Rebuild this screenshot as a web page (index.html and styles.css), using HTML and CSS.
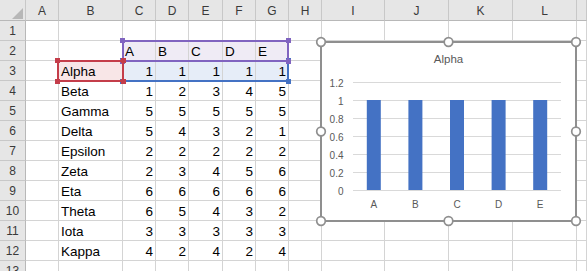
FILE: index.html
```
<!DOCTYPE html>
<html>
<head>
<meta charset="utf-8">
<link rel="stylesheet" href="styles.css">
</head>
<body>
<div class="sheet">
  <div class="ch corner"><span class="tri"></span></div>
  <div class="ch">A</div><div class="ch">B</div><div class="ch">C</div><div class="ch">D</div><div class="ch">E</div><div class="ch">F</div><div class="ch">G</div><div class="ch">H</div><div class="ch">I</div><div class="ch">J</div><div class="ch">K</div><div class="ch">L</div><div class="ch"></div>

  <div class="rh">1</div>
  <div class="c"></div><div class="c"></div><div class="c"></div><div class="c"></div><div class="c"></div><div class="c"></div><div class="c"></div><div class="c"></div><div class="c"></div><div class="c"></div><div class="c"></div><div class="c"></div><div class="c"></div>

  <div class="rh">2</div>
  <div class="c"></div><div class="c"></div>
  <div class="c fp">A</div><div class="c fp">B</div><div class="c fp">C</div><div class="c fp">D</div><div class="c fp">E</div>
  <div class="c"></div><div class="c"></div><div class="c"></div><div class="c"></div><div class="c"></div><div class="c"></div>

  <div class="rh">3</div>
  <div class="c"></div><div class="c fr">Alpha</div>
  <div class="c n fb">1</div><div class="c n fb">1</div><div class="c n fb">1</div><div class="c n fb">1</div><div class="c n fb">1</div>
  <div class="c"></div><div class="c"></div><div class="c"></div><div class="c"></div><div class="c"></div><div class="c"></div>

  <div class="rh">4</div>
  <div class="c"></div><div class="c">Beta</div>
  <div class="c n">1</div><div class="c n">2</div><div class="c n">3</div><div class="c n">4</div><div class="c n">5</div>
  <div class="c"></div><div class="c"></div><div class="c"></div><div class="c"></div><div class="c"></div><div class="c"></div>

  <div class="rh">5</div>
  <div class="c"></div><div class="c">Gamma</div>
  <div class="c n">5</div><div class="c n">5</div><div class="c n">5</div><div class="c n">5</div><div class="c n">5</div>
  <div class="c"></div><div class="c"></div><div class="c"></div><div class="c"></div><div class="c"></div><div class="c"></div>

  <div class="rh">6</div>
  <div class="c"></div><div class="c">Delta</div>
  <div class="c n">5</div><div class="c n">4</div><div class="c n">3</div><div class="c n">2</div><div class="c n">1</div>
  <div class="c"></div><div class="c"></div><div class="c"></div><div class="c"></div><div class="c"></div><div class="c"></div>

  <div class="rh">7</div>
  <div class="c"></div><div class="c">Epsilon</div>
  <div class="c n">2</div><div class="c n">2</div><div class="c n">2</div><div class="c n">2</div><div class="c n">2</div>
  <div class="c"></div><div class="c"></div><div class="c"></div><div class="c"></div><div class="c"></div><div class="c"></div>

  <div class="rh">8</div>
  <div class="c"></div><div class="c">Zeta</div>
  <div class="c n">2</div><div class="c n">3</div><div class="c n">4</div><div class="c n">5</div><div class="c n">6</div>
  <div class="c"></div><div class="c"></div><div class="c"></div><div class="c"></div><div class="c"></div><div class="c"></div>

  <div class="rh">9</div>
  <div class="c"></div><div class="c">Eta</div>
  <div class="c n">6</div><div class="c n">6</div><div class="c n">6</div><div class="c n">6</div><div class="c n">6</div>
  <div class="c"></div><div class="c"></div><div class="c"></div><div class="c"></div><div class="c"></div><div class="c"></div>

  <div class="rh">10</div>
  <div class="c"></div><div class="c">Theta</div>
  <div class="c n">6</div><div class="c n">5</div><div class="c n">4</div><div class="c n">3</div><div class="c n">2</div>
  <div class="c"></div><div class="c"></div><div class="c"></div><div class="c"></div><div class="c"></div><div class="c"></div>

  <div class="rh">11</div>
  <div class="c"></div><div class="c">Iota</div>
  <div class="c n">3</div><div class="c n">3</div><div class="c n">3</div><div class="c n">3</div><div class="c n">3</div>
  <div class="c"></div><div class="c"></div><div class="c"></div><div class="c"></div><div class="c"></div><div class="c"></div>

  <div class="rh">12</div>
  <div class="c"></div><div class="c">Kappa</div>
  <div class="c n">4</div><div class="c n">2</div><div class="c n">4</div><div class="c n">2</div><div class="c n">4</div>
  <div class="c"></div><div class="c"></div><div class="c"></div><div class="c"></div><div class="c"></div><div class="c"></div>

  <div class="rh">13</div>
  <div class="c"></div><div class="c"></div><div class="c"></div><div class="c"></div><div class="c"></div><div class="c"></div><div class="c"></div><div class="c"></div><div class="c"></div><div class="c"></div><div class="c"></div><div class="c"></div><div class="c"></div>

  <div class="sel sel-blue"><span class="sq tl"></span><span class="sq tr"></span><span class="sq bl"></span><span class="sq br"></span></div>
  <div class="sel sel-purple"><span class="sq tl"></span><span class="sq tr"></span><span class="sq bl"></span><span class="sq br"></span></div>
  <div class="sel sel-red"><span class="sq tl"></span><span class="sq tr"></span><span class="sq bl"></span><span class="sq br"></span></div>

  <div class="chart">
    <svg class="chart-svg" width="257" height="181" viewBox="0 0 257 181">
      <rect x="1" y="1" width="255" height="179" fill="#ffffff" stroke="#8f8f8f" stroke-width="2"/>
      <text class="ttl" x="128.5" y="21.7" text-anchor="middle">Alpha</text>
      <g stroke="#d9d9d9" stroke-width="1">
        <line x1="33" y1="41.5" x2="241" y2="41.5"/>
        <line x1="33" y1="59.5" x2="241" y2="59.5"/>
        <line x1="33" y1="77.5" x2="241" y2="77.5"/>
        <line x1="33" y1="95.5" x2="241" y2="95.5"/>
        <line x1="33" y1="113.5" x2="241" y2="113.5"/>
        <line x1="33" y1="131.5" x2="241" y2="131.5"/>
        <line x1="33" y1="149.5" x2="241" y2="149.5"/>
      </g>
      <g fill="#4472c4">
        <rect x="46.8" y="59" width="14" height="90"/>
        <rect x="88.4" y="59" width="14" height="90"/>
        <rect x="130" y="59" width="14" height="90"/>
        <rect x="171.6" y="59" width="14" height="90"/>
        <rect x="213.2" y="59" width="14" height="90"/>
      </g>
      <g class="lbl" text-anchor="end">
        <text x="23.5" y="45.5">1.2</text>
        <text x="23.5" y="63.5">1</text>
        <text x="23.5" y="81.5">0.8</text>
        <text x="23.5" y="99.5">0.6</text>
        <text x="23.5" y="117.5">0.4</text>
        <text x="23.5" y="135.5">0.2</text>
        <text x="23.5" y="153.5">0</text>
      </g>
      <g class="lbl" text-anchor="middle">
        <text x="53.8" y="167">A</text>
        <text x="95.4" y="167">B</text>
        <text x="137" y="167">C</text>
        <text x="178.6" y="167">D</text>
        <text x="220.2" y="167">E</text>
      </g>
      <g fill="#ffffff" stroke="#8f8f8f" stroke-width="1.7">
        <circle cx="1" cy="1" r="4.3"/>
        <circle cx="128.5" cy="1" r="4.3"/>
        <circle cx="256" cy="1" r="4.3"/>
        <circle cx="1" cy="90.5" r="4.3"/>
        <circle cx="256" cy="90.5" r="4.3"/>
        <circle cx="1" cy="180" r="4.3"/>
        <circle cx="128.5" cy="180" r="4.3"/>
        <circle cx="256" cy="180" r="4.3"/>
      </g>
    </svg>
  </div>
</div>
</body>
</html>
```
FILE: styles.css
```
* { box-sizing: border-box; }

html, body {
  margin: 0;
  padding: 0;
  background: #ffffff;
  overflow: hidden;
}

body {
  font-family: "Liberation Sans", Arial, sans-serif;
}

.sheet {
  position: relative;
  display: grid;
  grid-template-columns: 26px 33px 64px 33px 33px 34px 33px 33px 33px 63px 64px 64px 64px 10px;
  grid-template-rows: 21px;
  grid-auto-rows: 20px;
  width: 587px;
}

.c {
  border-right: 1px solid #d4d4d4;
  border-bottom: 1px solid #d4d4d4;
  font-size: 13.5px;
  line-height: 21px;
  color: #000000;
  padding: 0 2px;
  white-space: nowrap;
}

.n { text-align: right; }

.fr { background: #f8e6e7; }
.fp { background: #efebf5; }
.fb { background: #e6edf8; }

.ch {
  background: #e6e6e6;
  border-right: 1px solid #c8c8c8;
  border-bottom: 1px solid #b8b8b8;
  font-size: 12px;
  line-height: 22px;
  color: #3a3a3a;
  text-align: center;
}

.rh {
  background: #e6e6e6;
  border-right: 1px solid #b8b8b8;
  border-bottom: 1px solid #c8c8c8;
  font-size: 12px;
  line-height: 21px;
  color: #3a3a3a;
  text-align: center;
}

.corner {
  display: flex;
  justify-content: flex-end;
  align-items: flex-end;
  padding: 0 2px 1px 0;
}

.tri {
  width: 0;
  height: 0;
  border-left: 11px solid transparent;
  border-bottom: 11px solid #b7b7b7;
}

.sel {
  position: absolute;
  border: 2px solid;
  height: 22px;
}

.sel-blue { left: 122px; top: 60px; width: 167px; border-color: #4472c4; }
.sel-purple { left: 122px; top: 40px; width: 167px; border-color: #8064c0; }
.sel-red { left: 57px; top: 60px; width: 67px; border-color: #c43d4a; }

.sq {
  position: absolute;
  width: 5px;
  height: 5px;
}
.sel-blue .sq { background: #4472c4; }
.sel-purple .sq { background: #8064c0; }
.sel-red .sq { background: #c43d4a; }

.tl { left: -4px; top: -4px; }
.tr { right: -4px; top: -4px; }
.bl { left: -4px; bottom: -4px; }
.br { right: -4px; bottom: -4px; }

.chart {
  position: absolute;
  left: 320px;
  top: 41px;
  width: 257px;
  height: 181px;
}

.chart-svg {
  display: block;
  overflow: visible;
}

.ttl {
  font-family: "Liberation Sans", Arial, sans-serif;
  font-size: 11.5px;
  fill: #595959;
}

.lbl {
  font-family: "Liberation Sans", Arial, sans-serif;
  font-size: 10px;
  fill: #595959;
}
```
